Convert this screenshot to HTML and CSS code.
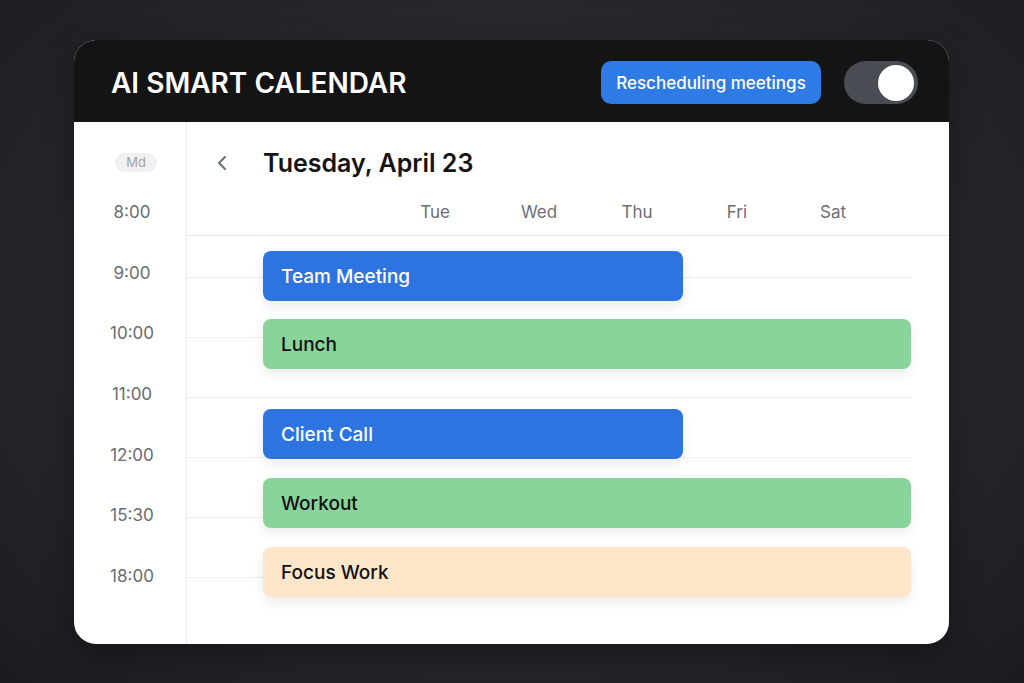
FILE: index.html
```html
<!DOCTYPE html>
<html>
<head>
  <title>AI Smart Calendar</title>
  <link rel="stylesheet" href="styles.css">
</head>
<body>
  <div class="card">
    <header class="topbar">
      <h1 class="brand">AI SMART CALENDAR</h1>
      <div class="actions">
        <button class="reschedule" type="button">Rescheduling meetings</button>
        <div class="toggle"><span class="knob"></span></div>
      </div>
    </header>

    <div class="body">
      <aside class="times">
        <span class="pill">Md</span>
        <ul class="hours">
          <li>8:00</li>
          <li>9:00</li>
          <li>10:00</li>
          <li>11:00</li>
          <li>12:00</li>
          <li>15:30</li>
          <li>18:00</li>
        </ul>
      </aside>

      <main class="main">
        <div class="date-row">
          <svg class="chevron" width="14" height="18" viewBox="0 0 14 18">
            <path d="M10 3 L4 9 L10 15" fill="none" stroke="#6b6e75" stroke-width="2" stroke-linecap="round" stroke-linejoin="round"/>
          </svg>
          <h2 class="date">Tuesday, April 23</h2>
        </div>
        <div class="days">
          <span>Tue</span>
          <span>Wed</span>
          <span>Thu</span>
          <span>Fri</span>
          <span>Sat</span>
        </div>

        <div class="events">
          <div class="event blue short first">Team Meeting</div>
          <div class="event green gap-sm">Lunch</div>
          <div class="event blue short gap-lg">Client Call</div>
          <div class="event green gap-md">Workout</div>
          <div class="event peach gap-md">Focus Work</div>
        </div>
      </main>
    </div>
  </div>
</body>
</html>
```

FILE: styles.css
```css
* { box-sizing: border-box; }
html, body { height: 100%; }
body {
  margin: 0;
  font-family: Inter, "Noto Sans", sans-serif;
  background: radial-gradient(ellipse at 50% 45%, #303236 0%, #26282b 55%, #1b1c1f 100%);
  overflow: hidden;
}

.card {
  position: relative;
  top: 40px;
  width: 875px;
  height: 604px;
  margin-left: 74px;
  border-radius: 22px;
  overflow: hidden;
  background: #fff;
  box-shadow: 0 10px 30px rgba(0, 0, 0, 0.35);
  display: flex;
  flex-direction: column;
}

.topbar {
  height: 82px;
  flex: none;
  background: #141414;
  display: flex;
  align-items: center;
  justify-content: space-between;
  padding: 3px 31px 0 37px;
}
.brand {
  margin: 0;
  color: #fff;
  font-size: 28px;
  font-weight: 600;
  letter-spacing: 0;
}
.actions { display: flex; align-items: center; gap: 23px; }
.reschedule {
  width: 220px;
  height: 43px;
  border: none;
  border-radius: 10px;
  background: #2f7be6;
  color: #fff;
  font-family: inherit;
  font-size: 17px;
  font-weight: 500;
}
.toggle {
  width: 74px;
  height: 43px;
  border-radius: 22px;
  background: #4a4c54;
  display: flex;
  align-items: center;
  justify-content: flex-end;
  padding-right: 4px;
}
.knob { width: 36px; height: 36px; border-radius: 50%; background: #fff; }

.body { flex: 1; display: flex; }

.times {
  width: 113px;
  flex: none;
  border-right: 1px solid #ececec;
  display: flex;
  flex-direction: column;
  align-items: center;
  padding: 31px 0 0 4px;
}
.pill {
  height: 19px;
  margin-left: 8px;
  padding: 0 11px;
  border-radius: 10px;
  background: #f1f1f1;
  color: #a5a5a5;
  font-size: 13px;
  line-height: 19px;
}
.hours {
  list-style: none;
  margin: 10px 0 0;
  padding: 0;
}
.hours li {
  height: 60.6px;
  display: flex;
  align-items: center;
  justify-content: center;
  color: #686b70;
  font-size: 17px;
}

.main { flex: 1; display: flex; flex-direction: column; }
.date-row {
  margin-top: 21px;
  height: 40px;
  display: flex;
  align-items: center;
  padding-left: 28px;
  gap: 34px;
}
.date {
  margin: 0;
  font-size: 25px;
  font-weight: 600;
  color: #141414;
}
.days {
  height: 53px;
  padding: 5px 0 0 198px;
  display: grid;
  grid-template-columns: 100px 108px 88px 112px 80px;
  align-items: center;
  border-bottom: 1px solid #ececec;
  color: #6b6e74;
  font-size: 17px;
}
.days span { text-align: center; }

.events {
  flex: 1;
  padding: 0 38px 0 76px;
  background-image: repeating-linear-gradient(to bottom, transparent 0, transparent 59px, #eeeeee 59px, #eeeeee 60px);
  background-position: 0 -18px;
  background-size: calc(100% - 38px) 100%;
  background-repeat: no-repeat;
  background-origin: border-box;
}
.event {
  height: 50px;
  border-radius: 8px;
  padding-left: 18px;
  display: flex;
  align-items: center;
  font-size: 19px;
  font-weight: 500;
  box-shadow: 0 5px 12px rgba(0, 0, 0, 0.08);
}
.event.short { width: 420px; }
.event.first { margin-top: 15px; }
.gap-sm { margin-top: 18px; }
.gap-lg { margin-top: 40px; }
.gap-md { margin-top: 19px; }
.blue { background: #2e74e1; color: #fff; }
.green { background: #88d49b; color: #111; }
.peach { background: #fde6c9; color: #111; }
```
